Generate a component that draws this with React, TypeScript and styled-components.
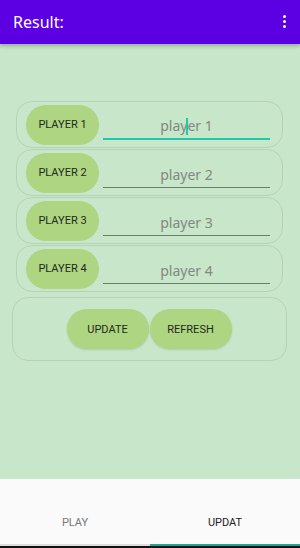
import styled, { createGlobalStyle } from "styled-components";

const GlobalStyle = createGlobalStyle`
  html, body {
    margin: 0;
    padding: 0;
    background: #c8e6c9;
  }
  * {
    box-sizing: border-box;
  }
`;

const players = [1, 2, 3, 4];

export default function App() {
  return (
    <>
      <GlobalStyle />
      <Page>
        <AppBar>
          <Title>Result:</Title>
          <Kebab>
            <Dot />
            <Dot />
            <Dot />
          </Kebab>
        </AppBar>
        <Content>
          <Rows>
            {players.map((n) => (
              <PlayerRow key={n}>
                <PlayerButton>PLAYER {n}</PlayerButton>
                <Field $focused={n === 1}>
                  <NameInput placeholder={`player ${n}`} />
                  {n === 1 && <Caret />}
                </Field>
              </PlayerRow>
            ))}
          </Rows>
          <ActionCard>
            <ActionButton>UPDATE</ActionButton>
            <ActionButton>REFRESH</ActionButton>
          </ActionCard>
        </Content>
        <TabBar>
          <Tab>PLAY</Tab>
          <Tab $active>UPDAT</Tab>
        </TabBar>
      </Page>
    </>
  );
}

const Page = styled.div`
  width: 300px;
  height: 548px;
  display: flex;
  flex-direction: column;
  font-family: Roboto, "Noto Sans", sans-serif;
  overflow: hidden;
`;

const AppBar = styled.div`
  height: 44px;
  flex-shrink: 0;
  background: #5c00e3;
  display: flex;
  align-items: center;
  justify-content: space-between;
  padding: 0 14px 0 13px;
  box-shadow: 0 2px 4px rgba(0, 0, 0, 0.25);
  position: relative;
  z-index: 1;
`;

const Title = styled.div`
  color: #ffffff;
  font-family: "Noto Sans", Roboto, sans-serif;
  font-size: 16px;
  margin-top: -1px;
`;

const Kebab = styled.div`
  display: flex;
  flex-direction: column;
  gap: 2px;
  margin-top: -2px;
`;

const Dot = styled.span`
  width: 3px;
  height: 3px;
  border-radius: 50%;
  background: #ffffff;
`;

const Content = styled.div`
  flex: 1;
  background: #c8e6c9;
  padding-top: 57px;
`;

const Rows = styled.div`
  margin: 0 17px 0 16px;
  display: flex;
  flex-direction: column;
  gap: 1px;
`;

const PlayerRow = styled.div`
  height: 47px;
  border: 1px solid rgba(150, 160, 150, 0.3);
  border-radius: 16px;
  display: flex;
  align-items: center;
  padding-left: 9px;
`;

const PlayerButton = styled.div`
  width: 73px;
  height: 40px;
  border-radius: 20px;
  background: #aed581;
  color: #1f2a1f;
  font-size: 11px;
  display: flex;
  align-items: center;
  justify-content: center;
  flex-shrink: 0;
`;

const Field = styled.div<{ $focused?: boolean }>`
  position: relative;
  margin-left: 4px;
  width: 167px;
  height: 26px;
  margin-top: 4px;
  border-bottom: ${(p) => (p.$focused ? "2px solid #22c9a8" : "1px solid #6d7d6d")};
`;

const NameInput = styled.input`
  width: 100%;
  height: 100%;
  border: none;
  outline: none;
  background: transparent;
  text-align: center;
  font-family: "Noto Sans", Roboto, sans-serif;
  font-size: 14px;
  padding: 0;
  &::placeholder {
    color: #808a80;
  }
`;

const Caret = styled.span`
  position: absolute;
  left: 83px;
  top: 4px;
  width: 2px;
  height: 17px;
  background: #22c9a8;
`;

const ActionCard = styled.div`
  margin: 5px 13px 0 12px;
  height: 64px;
  border: 1px solid rgba(150, 160, 150, 0.3);
  border-radius: 16px;
  display: flex;
  align-items: center;
  justify-content: center;
  gap: 1px;
  padding-right: 1px;
`;

const ActionButton = styled.div`
  width: 82px;
  height: 40px;
  border-radius: 20px;
  background: #aed581;
  color: #1f2a1f;
  font-size: 11px;
  display: flex;
  align-items: center;
  justify-content: center;
  box-shadow: 0 1px 2px rgba(0, 0, 0, 0.12);
`;

const TabBar = styled.div`
  height: 69px;
  flex-shrink: 0;
  background: #fafafa;
  display: flex;
  border-bottom: 2px solid #111111;
`;

const Tab = styled.div<{ $active?: boolean }>`
  flex: 1;
  display: flex;
  align-items: flex-end;
  justify-content: center;
  padding-bottom: 15px;
  font-size: 11px;
  color: ${(p) => (p.$active ? "#222222" : "#777777")};
  border-bottom: 2px solid ${(p) => (p.$active ? "#1aa893" : "#dddddd")};
`;
